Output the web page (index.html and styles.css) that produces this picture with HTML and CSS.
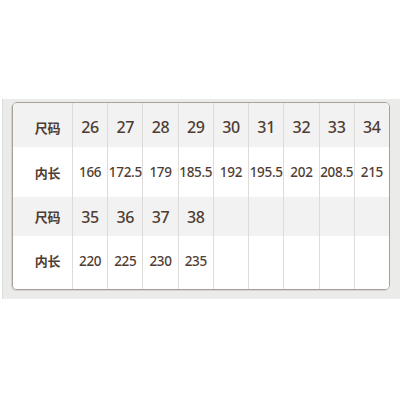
FILE: index.html
```html
<!DOCTYPE html>
<html lang="zh">
<head>
<meta charset="utf-8">
<link rel="stylesheet" href="styles.css">
</head>
<body>
<div class="panel">
  <div class="table">
    <div class="row head r1">
      <div class="cell label">尺码</div>
      <div class="cell">26</div><div class="cell">27</div><div class="cell">28</div><div class="cell">29</div><div class="cell">30</div><div class="cell">31</div><div class="cell">32</div><div class="cell">33</div><div class="cell">34</div>
    </div>
    <div class="row val r2">
      <div class="cell label">内长</div>
      <div class="cell">166</div><div class="cell">172.5</div><div class="cell">179</div><div class="cell">185.5</div><div class="cell">192</div><div class="cell">195.5</div><div class="cell">202</div><div class="cell">208.5</div><div class="cell">215</div>
    </div>
    <div class="row head r3">
      <div class="cell label">尺码</div>
      <div class="cell">35</div><div class="cell">36</div><div class="cell">37</div><div class="cell">38</div><div class="cell"></div><div class="cell"></div><div class="cell"></div><div class="cell"></div><div class="cell"></div>
    </div>
    <div class="row val r4">
      <div class="cell label">内长</div>
      <div class="cell">220</div><div class="cell">225</div><div class="cell">230</div><div class="cell">235</div><div class="cell"></div><div class="cell"></div><div class="cell"></div><div class="cell"></div><div class="cell"></div>
    </div>
  </div>
</div>
</body>
</html>
```

FILE: styles.css
```css
html, body {
  margin: 0;
  padding: 0;
  background: #ffffff;
}
body {
  width: 400px;
  height: 400px;
  font-family: "Noto Sans", "Noto Sans CJK SC", sans-serif;
  color: #4f3d33;
}
.panel {
  margin-top: 99px;
  margin-left: 2px;
  width: 387px;
  padding: 3px 9px 9px 9px;
  background: #ebebea;
  border-left: 1px solid #dcdcdc;
}
.table {
  width: 378px;
  box-sizing: border-box;
  border: 1px solid #a8a09a;
  border-radius: 5px;
  overflow: hidden;
  background: #ffffff;
  box-shadow: -1px 1px 0 #d6d2cf;
}
.row {
  display: grid;
  grid-template-columns: 59px repeat(9, 1fr);
}
.row.head { background: #f2f2f2; }
.row.val { background: #ffffff; }
.r1 { height: 44px; }
.r2 { height: 50px; }
.r3 { height: 39px; }
.r4 { height: 53px; }
.cell {
  display: flex;
  align-items: center;
  justify-content: center;
  border-left: 1px solid #dedbd8;
  white-space: nowrap;
  letter-spacing: -0.3px;
}
.cell.label {
  border-left: none;
  padding-left: 10px;
  font-family: "Noto Sans CJK SC", sans-serif;
  font-size: 13px;
  font-weight: 700;
}
.head .cell {
  font-size: 16px;
  font-weight: 500;
}
.head .cell.label { font-size: 13px; font-weight: 700; }
.val .cell {
  font-size: 13.5px;
  font-weight: 500;
}
.val .cell.label { font-size: 13px; font-weight: 700; }
.r1 .cell { padding-top: 4px; }
.r4 .cell { padding-bottom: 4px; }
```
